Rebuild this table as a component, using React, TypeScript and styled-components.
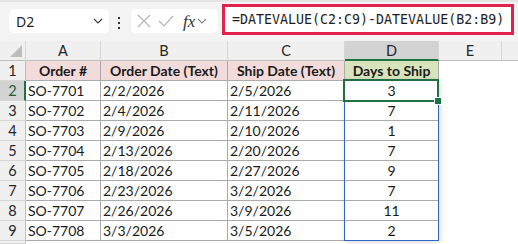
import React from "react";
import styled, { createGlobalStyle } from "styled-components";

const GlobalStyle = createGlobalStyle`
  html, body {
    margin: 0;
    padding: 0;
    background: #ffffff;
  }
  body {
    width: 518px;
    height: 244px;
    overflow: hidden;
  }
`;

const CELL_FONT = `"Lato", "Open Sans", sans-serif`;
const UI_FONT = `"Noto Sans", "Open Sans", sans-serif`;
const GREEN = "#1e7145";

interface Order {
  id: string;
  ordered: string;
  shipped: string;
  days: number;
}

const orders: Order[] = [
  { id: "SO-7701", ordered: "2/2/2026", shipped: "2/5/2026", days: 3 },
  { id: "SO-7702", ordered: "2/4/2026", shipped: "2/11/2026", days: 7 },
  { id: "SO-7703", ordered: "2/9/2026", shipped: "2/10/2026", days: 1 },
  { id: "SO-7704", ordered: "2/13/2026", shipped: "2/20/2026", days: 7 },
  { id: "SO-7705", ordered: "2/18/2026", shipped: "2/27/2026", days: 9 },
  { id: "SO-7706", ordered: "2/23/2026", shipped: "3/2/2026", days: 7 },
  { id: "SO-7707", ordered: "2/26/2026", shipped: "3/9/2026", days: 11 },
  { id: "SO-7708", ordered: "3/3/2026", shipped: "3/5/2026", days: 2 },
];

const columns = ["A", "B", "C", "D", "E", ""];

const Chevron: React.FC<{ color?: string }> = ({ color = "#444" }) => (
  <svg width="10" height="6" viewBox="0 0 10 6">
    <polyline points="1,1 5,5 9,1" fill="none" stroke={color} strokeWidth="1.2" />
  </svg>
);

const App: React.FC = () => {
  return (
    <>
      <GlobalStyle />
      <Toolbar>
        <NameBox>
          <span>D2</span>
          <Chevron />
        </NameBox>
        <Dots>
          <i />
          <i />
          <i />
        </Dots>
        <FxBox>
          <svg width="14" height="14" viewBox="0 0 14 14">
            <path d="M1 1 L13 13 M13 1 L1 13" stroke="#b5b5b5" strokeWidth="1.2" fill="none" />
          </svg>
          <svg width="16" height="12" viewBox="0 0 16 12">
            <polyline points="1,6 6,11 15,1" stroke="#b5b5b5" strokeWidth="1.2" fill="none" />
          </svg>
          <FxLabel>fx</FxLabel>
          <Chevron color="#8a8a8a" />
        </FxBox>
        <FormulaBox>=DATEVALUE(C2:C9)-DATEVALUE(B2:B9)</FormulaBox>
      </Toolbar>

      <Sheet>
        <Corner>
          <svg width="12" height="12" viewBox="0 0 12 12">
            <polygon points="12,0 12,12 0,12" fill="#bdbdbd" />
          </svg>
        </Corner>
        {columns.map((c, i) => (
          <ColHead key={i} $selected={c === "D"} $last={i === columns.length - 1}>
            {c}
          </ColHead>
        ))}

        <RowHead>1</RowHead>
        <Cell $fill="#f2dcdb" $bold $align="center">Order #</Cell>
        <Cell $fill="#f2dcdb" $bold $align="center">Order Date (Text)</Cell>
        <Cell $fill="#f2dcdb" $bold $align="center">Ship Date (Text)</Cell>
        <Cell $fill="#d8e4bc" $bold $align="center">Days to Ship</Cell>
        <Blank />
        <Blank />

        {orders.map((o, i) => (
          <React.Fragment key={o.id}>
            <RowHead $selected={i === 0}>{i + 2}</RowHead>
            <Cell>{o.id}</Cell>
            <Cell>{o.ordered}</Cell>
            <Cell>{o.shipped}</Cell>
            <Cell $align="center" $active={i === 0}>
              {o.days}
              {i === 0 && (
                <>
                  <RangeBox $rows={orders.length} />
                  <ActiveBorder>
                    <FillHandle />
                  </ActiveBorder>
                </>
              )}
            </Cell>
            <Blank />
            <Blank />
          </React.Fragment>
        ))}

        <RowHead />
        <Blank />
        <Blank />
        <Blank />
        <Blank />
        <Blank />
        <Blank />
      </Sheet>
    </>
  );
};

const Toolbar = styled.div`
  height: 41px;
  box-sizing: border-box;
  display: flex;
  align-items: flex-start;
  background: #f3f3f3;
  border-top: 2px solid #e4e4e4;
  padding-left: 9px;
`;

const NameBox = styled.div`
  margin-top: 7px;
  width: 100px;
  height: 24px;
  box-sizing: border-box;
  background: #ffffff;
  border-radius: 5px;
  display: flex;
  align-items: center;
  justify-content: space-between;
  padding: 0 6px 0 7px;
  font-family: ${UI_FONT};
  font-size: 14px;
  color: #1f1f1f;
`;

const Dots = styled.div`
  width: 20px;
  margin-right: 2px;
  margin-top: 15px;
  display: flex;
  flex-direction: column;
  align-items: center;
  gap: 3px;

  i {
    display: block;
    width: 2px;
    height: 2px;
    background: #333;
  }
`;

const FxBox = styled.div`
  margin-top: 7px;
  width: 87px;
  height: 24px;
  box-sizing: border-box;
  background: #ffffff;
  border-radius: 5px;
  display: flex;
  align-items: center;
  gap: 7px;
  padding-left: 6px;
`;

const FxLabel = styled.span`
  font-family: "Liberation Serif", "DejaVu Serif", serif;
  font-style: italic;
  font-size: 17px;
  color: #333;
  margin-left: 2px;
  margin-right: -5px;
  line-height: 1;
`;

const FormulaBox = styled.div`
  margin-top: 2px;
  margin-left: 4px;
  width: 292px;
  height: 31px;
  box-sizing: border-box;
  background: #ffffff;
  border: 3px solid #e2224c;
  display: flex;
  align-items: center;
  padding-left: 7px;
  font-family: "DejaVu Sans Mono", monospace;
  font-size: 13.3px;
  color: #1e1e1e;
  white-space: nowrap;
`;

const Sheet = styled.div`
  display: grid;
  grid-template-columns: 26px 75px 127px 117px 94px 63px 1fr;
  grid-template-rows: repeat(10, 20px) 1fr;
  height: 203px;
  font-family: ${CELL_FONT};
  font-size: 14px;
  color: #1a1a1a;
`;

const Corner = styled.div`
  background: #f0f0f0;
  border-right: 1px solid #d6d6d6;
  border-bottom: 1px solid #bebebe;
  display: flex;
  align-items: flex-end;
  justify-content: flex-end;
  padding: 0 3px 3px 0;
`;

const ColHead = styled.div<{ $selected?: boolean; $last?: boolean }>`
  background: ${(p) => (p.$selected ? "#d3d3d3" : "#f0f0f0")};
  border-right: ${(p) => (p.$last ? "none" : "1px solid #d6d6d6")};
  border-bottom: ${(p) => (p.$selected ? `2px solid ${GREEN}` : "1px solid #bebebe")};
  display: flex;
  align-items: center;
  justify-content: center;
  color: #262626;
  font-size: 14.5px;
`;

const RowHead = styled.div<{ $selected?: boolean }>`
  background: ${(p) => (p.$selected ? "#d3d3d3" : "#f0f0f0")};
  border-right: ${(p) => (p.$selected ? `2px solid ${GREEN}` : "1px solid #bebebe")};
  border-bottom: 1px solid #d6d6d6;
  display: flex;
  align-items: center;
  justify-content: center;
  color: ${(p) => (p.$selected ? "#1d5e3a" : "#262626")};
  font-size: 14.5px;
  padding-left: ${(p) => (p.$selected ? "1px" : "0")};
`;

const Cell = styled.div<{
  $fill?: string;
  $bold?: boolean;
  $align?: "left" | "center";
  $active?: boolean;
}>`
  position: ${(p) => (p.$active ? "relative" : "static")};
  background: ${(p) => p.$fill || "#ffffff"};
  border-right: 1px solid #ababab;
  border-bottom: 1px solid #ababab;
  font-weight: ${(p) => (p.$bold ? 700 : 400)};
  text-align: ${(p) => p.$align || "left"};
  padding: 0 2px;
  line-height: 19px;
  white-space: nowrap;
`;

const Blank = styled.div`
  background: #ffffff;
`;

/* range D2:D9, drawn over the column from the active cell */
const RangeBox = styled.div<{ $rows: number }>`
  position: absolute;
  left: -1px;
  top: -1px;
  width: 95px;
  height: ${(p) => p.$rows * 20 + 1}px;
  box-sizing: border-box;
  border: 1px solid #2f66c8;
  box-shadow: 1px 1px 6px rgba(0, 0, 0, 0.16);
  pointer-events: none;
  z-index: 1;
`;

const ActiveBorder = styled.div`
  position: absolute;
  left: -2px;
  top: -2px;
  right: -1px;
  bottom: -2px;
  border: 2px solid ${GREEN};
  pointer-events: none;
  z-index: 2;
`;

const FillHandle = styled.div`
  position: absolute;
  right: -5px;
  bottom: -5px;
  width: 6px;
  height: 6px;
  background: ${GREEN};
  border: 1px solid #ffffff;
`;

export default App;
